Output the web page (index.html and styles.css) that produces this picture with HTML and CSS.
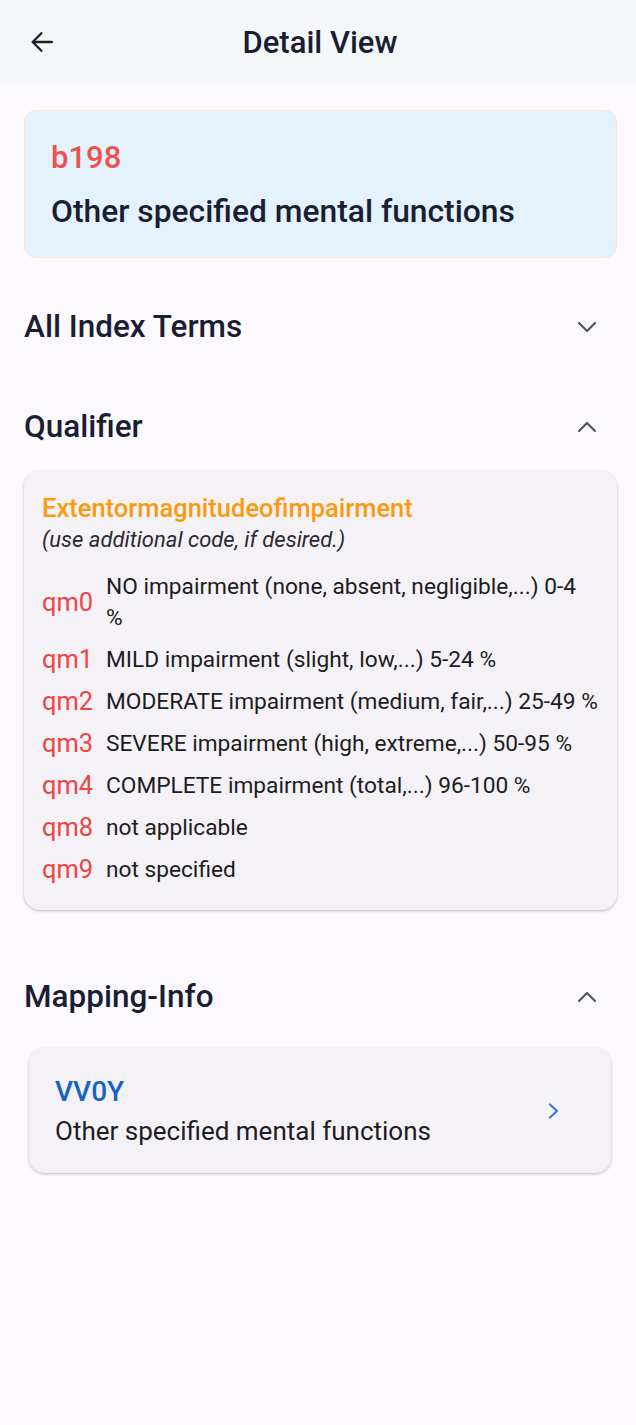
FILE: index.html
```html
<!DOCTYPE html>
<html>
<head>
<meta charset="utf-8">
<link rel="stylesheet" href="styles.css">
</head>
<body>
<header class="appbar">
  <button class="back" aria-label="Back">
    <svg width="28" height="28" viewBox="0 0 24 24"><path d="M20.5 12H4M11.5 4.5L4 12l7.5 7.5" fill="none" stroke="#1b1d33" stroke-width="2" stroke-linecap="round" stroke-linejoin="round"/></svg>
  </button>
  <h1 class="title">Detail View</h1>
  <span class="spacer"></span>
</header>
<main class="content">
  <section class="code-card">
    <div class="code">b198</div>
    <div class="code-name">Other specified mental functions</div>
  </section>

  <div class="section-head head-index">
    <h2>All Index Terms</h2>
    <svg class="chev" width="20" height="12" viewBox="0 0 20 12"><path d="M2 2l8 8 8-8" fill="none" stroke="#55555f" stroke-width="2.2" stroke-linecap="round" stroke-linejoin="round"/></svg>
  </div>

  <div class="section-head head-qual">
    <h2>Qualifier</h2>
    <svg class="chev" width="20" height="12" viewBox="0 0 20 12"><path d="M2 10l8-8 8 8" fill="none" stroke="#55555f" stroke-width="2.2" stroke-linecap="round" stroke-linejoin="round"/></svg>
  </div>

  <section class="qual-card">
    <div class="qual-title">Extentormagnitudeofimpairment</div>
    <div class="qual-note">(use additional code, if desired.)</div>
    <div class="qual-list">
      <div class="qrow"><span class="qcode">qm0</span><span class="qdesc">NO impairment (none, absent, negligible,...) 0-4<br>%</span></div>
      <div class="qrow"><span class="qcode">qm1</span><span class="qdesc">MILD impairment (slight, low,...) 5-24 %</span></div>
      <div class="qrow"><span class="qcode">qm2</span><span class="qdesc">MODERATE impairment (medium, fair,...) 25-49 %</span></div>
      <div class="qrow"><span class="qcode">qm3</span><span class="qdesc">SEVERE impairment (high, extreme,...) 50-95 %</span></div>
      <div class="qrow"><span class="qcode">qm4</span><span class="qdesc">COMPLETE impairment (total,...) 96-100 %</span></div>
      <div class="qrow"><span class="qcode">qm8</span><span class="qdesc">not applicable</span></div>
      <div class="qrow"><span class="qcode">qm9</span><span class="qdesc">not specified</span></div>
    </div>
  </section>

  <div class="section-head head-map">
    <h2>Mapping-Info</h2>
    <svg class="chev" width="20" height="12" viewBox="0 0 20 12"><path d="M2 10l8-8 8 8" fill="none" stroke="#55555f" stroke-width="2.2" stroke-linecap="round" stroke-linejoin="round"/></svg>
  </div>

  <section class="map-card">
    <div class="map-text">
      <div class="map-code">VV0Y</div>
      <div class="map-name">Other specified mental functions</div>
    </div>
    <svg class="map-chev" width="14" height="18" viewBox="0 0 14 18"><path d="M3 2.5l7 6.5-7 6.5" fill="none" stroke="#2f7de1" stroke-width="2.2" stroke-linecap="round" stroke-linejoin="round"/></svg>
  </section>
</main>
</body>
</html>
```

FILE: styles.css
```css
* { box-sizing: border-box; }
html, body { margin: 0; padding: 0; }
body {
  width: 636px;
  min-height: 1425px;
  background: #fcf9fe;
  font-family: Roboto, "Noto Sans", sans-serif;
  color: #1b1d33;
}
.appbar {
  height: 84px;
  background: #f5f6f8;
  display: flex;
  align-items: center;
  padding: 0 22px 0 26px;
}
.back {
  width: 32px; height: 32px;
  border: 0; background: none; padding: 0;
  display: flex; align-items: center; justify-content: center;
}
.title {
  flex: 1;
  margin: 0;
  text-align: center;
  font-size: 31px;
  font-weight: 500;
  color: #1b1d33;
}
.spacer { width: 32px; }
.content {
  padding: 26px 19px 0 24px;
  display: flex;
  flex-direction: column;
}
.code-card {
  background: #e3f2fd;
  border: 1.5px solid #fbe3c3;
  border-radius: 12px;
  padding: 28px 26px 27px;
  display: flex;
  flex-direction: column;
  gap: 15px;
}
.code {
  color: #ef4f4f;
  font-size: 31px;
  font-weight: 500;
  line-height: 38px;
}
.code-name {
  font-size: 31.8px;
  font-weight: 500;
  line-height: 38px;
  color: #1b1d33;
}
.section-head {
  display: flex;
  align-items: center;
  justify-content: space-between;
  padding-right: 20px;
}
.section-head h2 {
  margin: 0;
  font-size: 31.5px;
  font-weight: 500;
  line-height: 36px;
  color: #1b1d33;
}
.head-index { margin-top: 51px; }
.head-qual { margin-top: 64px; }
.head-map { margin-top: 69px; }
.qual-card {
  margin-top: 26px;
  background: #f4f2f7;
  border-radius: 16px;
  box-shadow: 0 1px 3px rgba(0,0,0,0.25);
  padding: 22px 10px 25px 18px;
}
.qual-title {
  color: #fb9a0e;
  font-size: 25.5px;
  font-weight: 500;
  line-height: 30px;
}
.qual-note {
  font-style: italic;
  font-size: 22px;
  line-height: 28px;
  color: #2a2a30;
  margin-top: 3px;
}
.qual-list {
  margin-top: 17px;
  display: flex;
  flex-direction: column;
  gap: 11px;
}
.qrow {
  display: flex;
  align-items: center;
  gap: 12px;
}
.qcode {
  color: #ef4444;
  font-size: 25.5px;
  line-height: 31px;
  width: 52px;
  flex: none;
}
.qdesc {
  font-size: 22.7px;
  line-height: 31px;
  color: #1c1c22;
}
.map-card {
  margin: 33px 6px 0 5px;
  background: #f4f2f7;
  border-radius: 16px;
  box-shadow: 0 1px 3px rgba(0,0,0,0.25);
  padding: 28px 26px 27px 26px;
  display: flex;
  align-items: center;
  justify-content: space-between;
}
.map-text { display: flex; flex-direction: column; gap: 8px; }
.map-code {
  color: #1565c0;
  font-size: 28px;
  font-weight: 500;
  line-height: 32px;
}
.map-name {
  font-size: 26px;
  line-height: 30px;
  color: #1c1c22;
}
.map-chev { margin-right: 24px; }
```
